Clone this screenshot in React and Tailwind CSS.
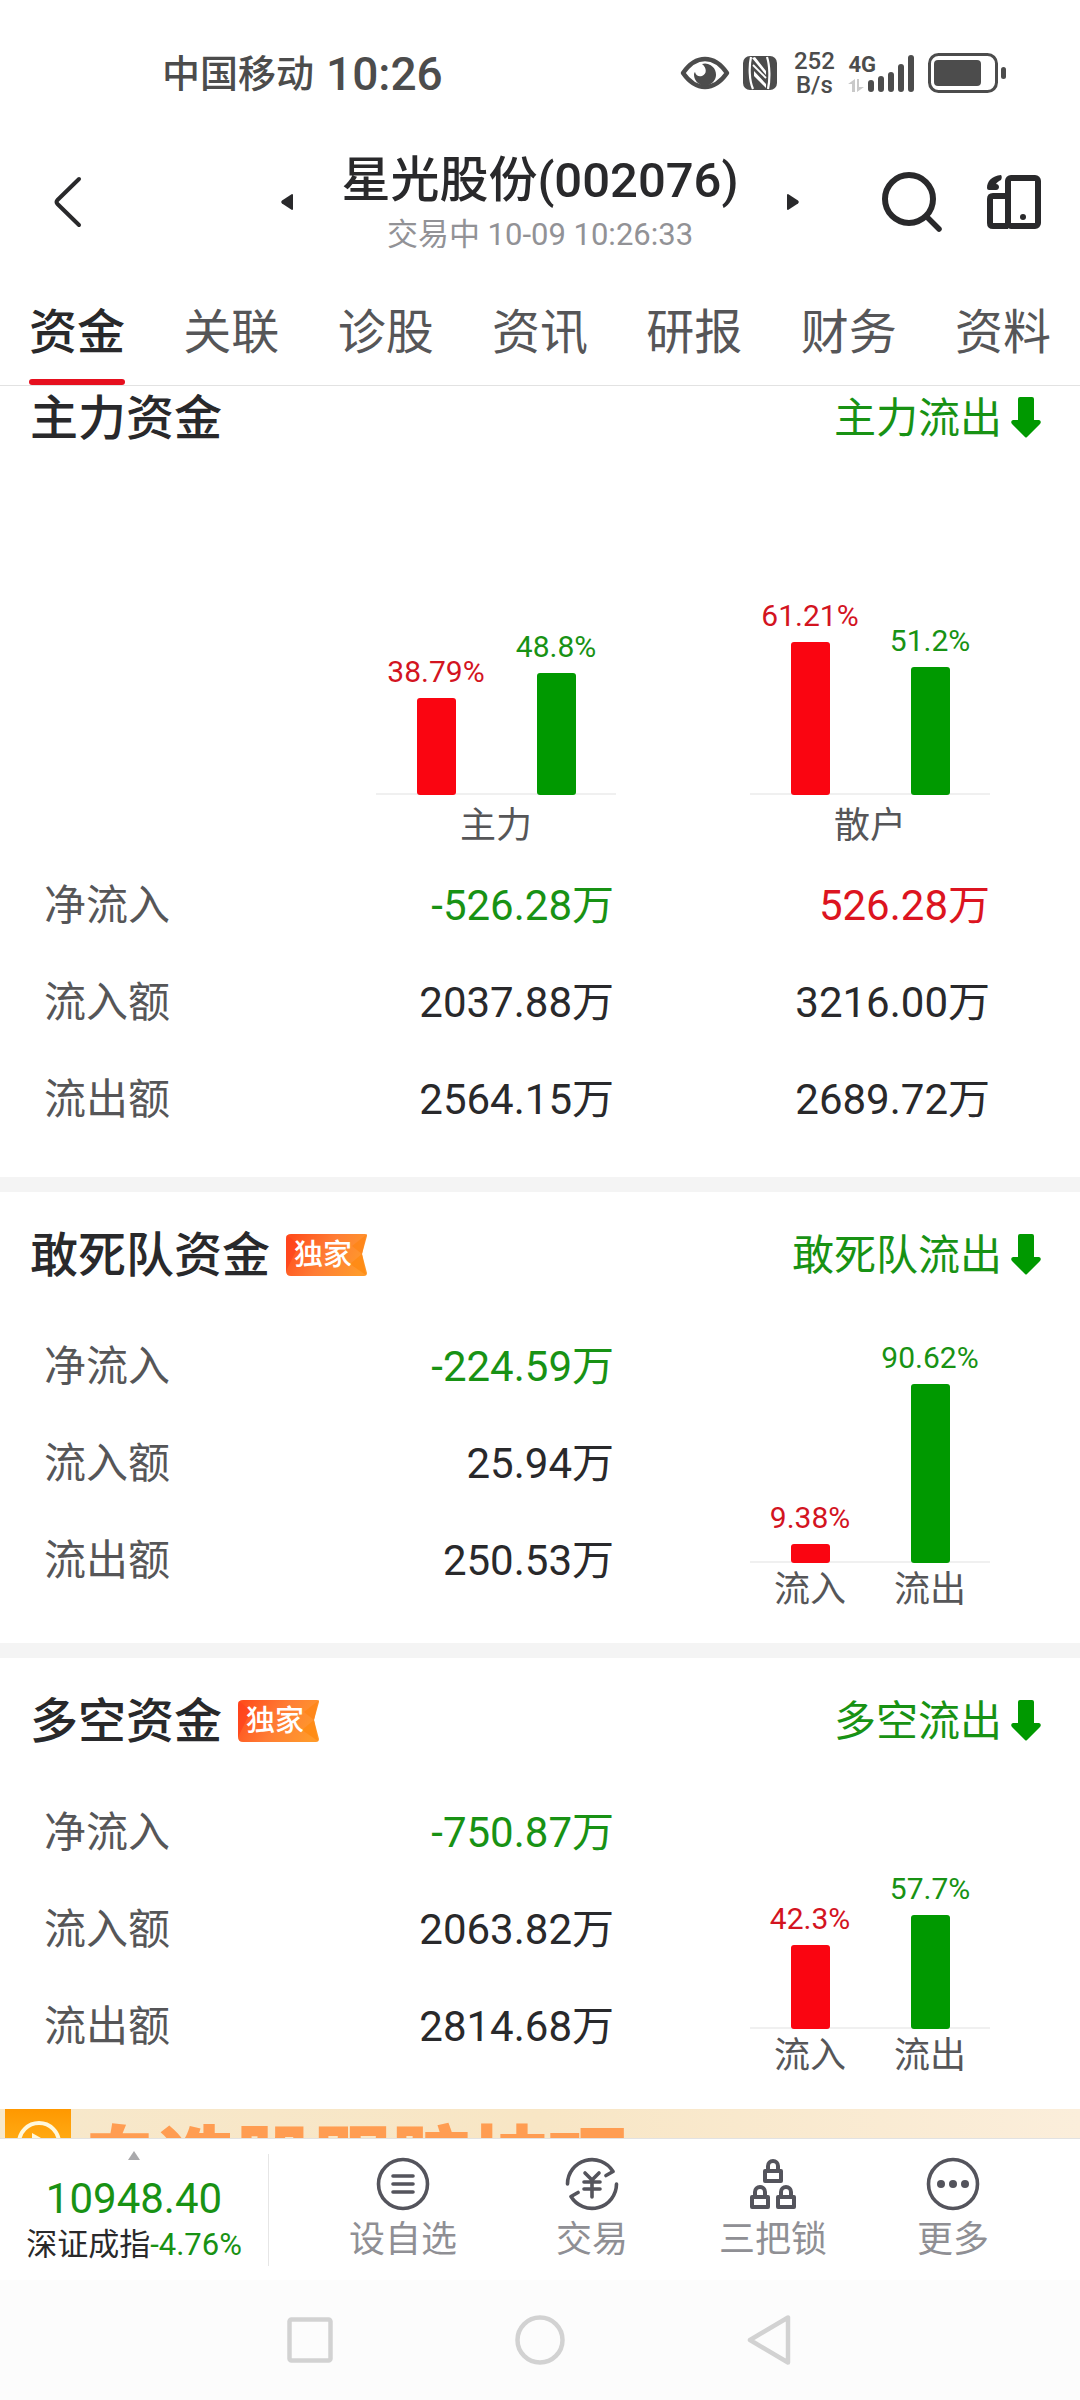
const TABS = ["资金", "关联", "诊股", "资讯", "研报", "财务", "资料"];

const OVERVIEW = [
  { label: "净流入", main: "-526.28万", retail: "526.28万", signed: true },
  { label: "流入额", main: "2037.88万", retail: "3216.00万" },
  { label: "流出额", main: "2564.15万", retail: "2689.72万" },
];

function StatusBar() {
  return (
    <div className="flex h-[146px] shrink-0 items-center justify-between pr-[74px] pl-[162px] text-[#4c4c4c]">
      <div className="flex items-center gap-[12px] pt-[2px] font-medium">
        <span className="text-[38px] leading-[56px]">中国移动</span>
        <span className="text-[46px] leading-[56px]">10:26</span>
      </div>
      <div className="flex items-center">
        <svg className="h-[34px] w-[50px]" viewBox="0 0 50 34" fill="none" aria-hidden="true">
          <path d="M3 17C10 7 17 3 25 3s15 4 22 14c-7 10-14 14-22 14S10 27 3 17Z" stroke="currentColor" strokeWidth="4.5" strokeLinejoin="round" />
          <path d="M22 8a11 11 0 1 1-8 11c0-1 0-2 1-3 1 4 4 5 7 4 5-2 5-8 0-12Z" fill="currentColor" />
        </svg>
        <svg className="ml-[13px] h-[34px] w-[34px]" viewBox="0 0 34 34" aria-hidden="true">
          <rect width="34" height="34" rx="7" fill="currentColor" />
          <path d="M8 1c-2 9-2 23 2 32M25 33c2-9 2-23-1-32" stroke="#fff" strokeWidth="2.2" fill="none" />
          <path d="M9 2l3-1 11 14v4ZM11 15l12 13v4L11 20Z" fill="#fff" />
          <path d="M10 9l13 13" stroke="#fff" strokeWidth="1.800" fill="none" />
        </svg>
        <div className="ml-[17px] flex w-[40px] flex-col items-center text-[24px] leading-[24px] font-medium">
          <span>252</span>
          <span>B/s</span>
        </div>
        <div className="ml-[14px] flex h-[38px] items-end">
          <div className="flex h-full flex-col justify-between">
            <span className="text-[22px] leading-[22px] font-bold">4G</span>
            <svg className="h-[13px] w-[16px]" viewBox="0 0 16 13" aria-hidden="true">
              <path d="M7 0v13H4V5H0ZM9 13V0h2v8h5Z" fill="#c9c9c9" />
            </svg>
          </div>
          <svg className="-ml-[8px] h-[37px] w-[46px]" viewBox="0 0 46 37" fill="currentColor" aria-hidden="true">
            <rect x="0" y="25" width="6" height="12" rx="3" />
            <rect x="10" y="21" width="6" height="16" rx="3" />
            <rect x="20" y="17" width="6" height="20" rx="3" />
            <rect x="30" y="9" width="6" height="28" rx="3" />
            <rect x="40" y="0" width="6" height="37" rx="3" />
          </svg>
        </div>
        <svg className="ml-[14px] h-[40px] w-[78px]" viewBox="0 0 78 40" aria-hidden="true">
          <rect x="1.5" y="1.5" width="67" height="37" rx="9" fill="none" stroke="currentColor" strokeWidth="3" />
          <rect x="6" y="7" width="47" height="26" rx="4" fill="currentColor" />
          <rect x="73" y="14" width="5" height="12" rx="2.5" fill="currentColor" />
        </svg>
      </div>
    </div>
  );
}

function TitleBar() {
  return (
    <header className="grid h-[112px] shrink-0 grid-cols-[1fr_auto_1fr] items-center px-[39px] text-[#29292b]">
      <button type="button" aria-label="返回" className="justify-self-start pl-[13px]">
        <svg className="h-[54px] w-[30px]" viewBox="0 0 30 54" fill="none" aria-hidden="true">
          <path d="M27 4 5.500 25q-2 2 0 4L27 50" stroke="currentColor" strokeWidth="4" strokeLinecap="round" />
        </svg>
      </button>
      <div className="flex items-center gap-[48px]">
        <button type="button" aria-label="上一只">
          <svg className="h-[16px] w-[12px]" viewBox="0 0 12 16" aria-hidden="true">
            <path d="M12 1v14q0 1-1 1L1 9.500Q-.5 8 1 6.500L11 0q1 0 1 1Z" fill="currentColor" />
          </svg>
        </button>
        <div className="flex flex-col items-center pt-[2px]">
          <h1 className="text-[49px] leading-[64px] font-medium">星光股份(002076)</h1>
          <p className="text-[31px] leading-[44px] text-[#929296]">交易中 10-09 10:26:33</p>
        </div>
        <button type="button" aria-label="下一只">
          <svg className="h-[16px] w-[12px]" viewBox="0 0 12 16" aria-hidden="true">
            <path d="M0 1v14q0 1 1 1l10-6.500q1.500-1.500 0-3L1 0Q0 0 0 1Z" fill="currentColor" />
          </svg>
        </button>
      </div>
      <div className="flex items-center gap-[45px] justify-self-end">
        <button type="button" aria-label="搜索">
          <svg className="h-[60px] w-[60px]" viewBox="0 0 60 60" fill="none" stroke="currentColor" strokeLinecap="round" aria-hidden="true">
            <circle cx="27" cy="27" r="24" strokeWidth="6" />
            <path d="M45 45l12 12" strokeWidth="5.500" />
          </svg>
        </button>
        <button type="button" aria-label="切换设备">
          <svg className="h-[54px] w-[54px]" viewBox="0 0 54 54" fill="none" stroke="currentColor" aria-hidden="true">
            <rect x="21" y="3" width="30" height="48" rx="3" strokeWidth="6" />
            <path d="M21 21H6q-3 0-3 3v24q0 3 3 3h15" strokeWidth="6" />
            <circle cx="36" cy="42" r="3" fill="currentColor" stroke="none" />
            <path d="M14 0c-9 1-14 6-14 13q0 2 2 2h7c4 0 4-6 0-6 1-2 3-3 5-4 1-2 1-4 0-5Z" fill="currentColor" stroke="none" />
          </svg>
        </button>
      </div>
    </header>
  );
}

function Tabs() {
  return (
    <nav className="flex shrink-0 justify-between border-b border-[#e2e2e2] px-[29px] text-[48px] leading-[64px] text-[#565658]">
      {TABS.map((tab, i) => (
        <button
          key={tab}
          type="button"
          aria-current={i === 0 ? "page" : undefined}
          className={i === 0 ? "flex flex-col pt-[43px] font-medium text-[#29292b]" : "flex flex-col pt-[43px]"}
        >
          {tab}
          <span className={i === 0 ? "mt-[14px] h-[6px] w-full rounded-full bg-[#e60f1e]" : "mt-[14px] h-[6px] w-full"} />
        </button>
      ))}
    </nav>
  );
}

function ExclusiveBadge() {
  return (
    <span className="relative mb-[3px] flex h-[42px] w-[81px] items-center pl-[8px] text-[29px] leading-[42px] font-medium text-white">
      <svg className="absolute inset-0 h-full w-full" viewBox="0 0 81 42" aria-hidden="true">
        <defs>
          <linearGradient id="badge" x1="0" y1="0.300" x2="1" y2="0.600">
            <stop offset="0" stopColor="#ff4f1c" />
            <stop offset="0.500" stopColor="#ff7d35" />
            <stop offset="1" stopColor="#ff9a2b" />
          </linearGradient>
        </defs>
        <path d="M5 0h74q3 0 2 2l-5 18 5 19q0 3-3 3H5q-5 0-5-5V5q0-5 5-5Z" fill="url(#badge)" />
        <path d="M1 1l12 10-13 26V5q0-3 1-4Z" fill="#ff3d1c" opacity=".6" />
        <path d="M80 1L66 12l10 8Z" fill="#ff8417" opacity=".8" />
        <path d="M80 41L64 30l12-10Z" fill="#ff8a12" opacity=".8" />
      </svg>
      <span className="relative">独家</span>
    </span>
  );
}

function SectionHeading({ title, trend, exclusive }) {
  return (
    <div className="flex h-[66px] items-center justify-between pr-[39px] pl-[30px]">
      <div className="flex items-center gap-[16px]">
        <h2 className="text-[48px] leading-[66px] font-medium text-[#29292b]">{title}</h2>
        {exclusive && <ExclusiveBadge />}
      </div>
      <a href="#trend" className="flex items-center gap-[9px] text-[42px] leading-[66px] text-[#189214]">
        {trend}
        <svg className="mb-[4px] h-[41px] w-[30px]" viewBox="0 0 30 41" aria-hidden="true">
          <path d="M9 0h12q2 0 2 2v21h5q3 1 1 4L16 40q-1 1-2 0L1 27q-2-3 1-4h5V2q0-2 2-2Z" fill="#009900" />
        </svg>
      </a>
    </div>
  );
}

function Bar({ text, size, up }) {
  return (
    <div className="flex flex-1 flex-col items-center">
      <span className={up ? "text-[30px] leading-[36px] text-[#d3141f]" : "text-[30px] leading-[36px] text-[#189214]"}>{text}</span>
      <div
        className={up ? "mt-[8px] w-[39px] rounded-[3px] bg-[#fa0511]" : "mt-[8px] w-[39px] rounded-[3px] bg-[#009900]"}
        style={{ height: size }}
      />
    </div>
  );
}

function BarChart({ inflow, outflow, scale, labels, className }) {
  return (
    <figure className={className}>
      <div className="flex flex-1 items-end border-b-2 border-[#f0f0f0]">
        <div className="-mb-[2px] flex flex-1 items-end">
          <Bar text={`${inflow}%`} size={Math.round(inflow * scale)} up />
          <Bar text={`${outflow}%`} size={Math.round(outflow * scale)} />
        </div>
      </div>
      <figcaption className="flex text-[36px] text-[#565658]">
        {labels.map((label) => (
          <span key={label} className="flex-1 text-center">{label}</span>
        ))}
      </figcaption>
    </figure>
  );
}

const ROW = "h-[97px] text-[42px] leading-[60px]";
const LABEL = "text-left font-normal text-[#565658]";

function ExclusiveSection({ title, trend, rows, inflow, outflow }) {
  return (
    <section className="border-t-[15px] border-[#f4f4f4] pt-[31px] pb-[26px]">
      <SectionHeading title={title} trend={trend} exclusive />
      <div className="mt-[29px] flex items-start pr-[90px] pl-[44px]">
        <table className="flex-1 table-fixed pt-px">
          <tbody className="block">
            {rows.map(([label, value], i) => (
              <tr key={label} className={`${ROW} flex items-center justify-between`}>
                <th scope="row" className={LABEL}>{label}</th>
                <td className={i === 0 ? "text-right text-[#189214]" : "text-right text-[#29292b]"}>{value}</td>
              </tr>
            ))}
          </tbody>
        </table>
        <BarChart
          inflow={inflow}
          outflow={outflow}
          scale={1.98}
          labels={["流入", "流出"]}
          className="ml-[136px] flex h-[299px] w-[240px] flex-col leading-[54px]"
        />
      </div>
    </section>
  );
}

function Banner() {
  return (
    <a href="#course" className="flex items-start bg-linear-to-r from-[#f7e8cb] via-[#f8e6c5] to-[#fbeedb] pl-[5px]">
      <svg className="h-[96px] w-[66px] shrink-0" viewBox="0 0 66 96" aria-hidden="true">
        <defs>
          <linearGradient id="play" x1="0" y1="0" x2="0" y2="1">
            <stop offset="0" stopColor="#ff9800" />
            <stop offset="0.500" stopColor="#ffb41f" />
          </linearGradient>
        </defs>
        <rect width="66" height="96" fill="url(#play)" />
        <circle cx="34" cy="34" r="20" fill="none" stroke="#fff8dc" strokeWidth="4" />
        <path d="M27 24l18 10-18 10Z" fill="#fff8dc" />
      </svg>
      <span className="pt-[14px] pl-[9px] text-[78px] leading-[84px] font-black whitespace-nowrap text-[#ff9d52]">自选股跟踪技巧</span>
    </a>
  );
}

function ListIcon() {
  return (
    <svg className="h-[54px] w-[54px]" viewBox="0 0 54 54" fill="none" stroke="#54545c" strokeWidth="3.600" strokeLinecap="round" aria-hidden="true">
      <circle cx="27" cy="27" r="24.500" />
      <path d="M17 19h20M17 27h20M17 35h20" />
    </svg>
  );
}

function TradeIcon() {
  return (
    <svg className="h-[54px] w-[54px]" viewBox="0 0 54 54" fill="none" stroke="#54545c" strokeWidth="3.600" strokeLinecap="round" strokeLinejoin="round" aria-hidden="true">
      <path d="M2.500 27A24.500 24.500 0 0 1 48 14.500L41 18.500" />
      <path d="M51.500 27A24.500 24.500 0 0 1 6 39.500L13 35.500" />
      <path d="M20 16l7 7 7-7M27 23v17M19 25h16M19 32h16" />
    </svg>
  );
}

function LocksIcon() {
  return (
    <svg className="h-[54px] w-[54px]" viewBox="0 0 54 54" fill="none" stroke="#54545c" strokeWidth="4" strokeLinejoin="round" aria-hidden="true">
      <rect x="19" y="14" width="16" height="10" />
      <path d="M22 14V9a5 5 0 0 1 10 0v5" />
      <rect x="6" y="40" width="16" height="10" />
      <path d="M9 40v-5a5 5 0 0 1 10 0v5" />
      <rect x="32" y="40" width="16" height="10" />
      <path d="M35 40v-5a5 5 0 0 1 10 0v5" />
    </svg>
  );
}

function MoreIcon() {
  return (
    <svg className="h-[54px] w-[54px]" viewBox="0 0 54 54" fill="none" aria-hidden="true">
      <circle cx="27" cy="27" r="24.500" stroke="#54545c" strokeWidth="3.600" />
      <g fill="#54545c">
        <circle cx="15" cy="27" r="4" />
        <circle cx="27" cy="27" r="4" />
        <circle cx="39" cy="27" r="4" />
      </g>
    </svg>
  );
}

const ACTIONS = [
  ["设自选", ListIcon],
  ["交易", TradeIcon],
  ["三把锁", LocksIcon],
  ["更多", MoreIcon],
];

function BottomBar() {
  return (
    <footer className="flex h-[142px] shrink-0 items-center border-t border-[#e2e2e2]">
      <button type="button" className="flex h-[112px] w-[269px] flex-col items-center justify-start border-r border-[#e6e6e6]">
        <svg className="-mt-[3px] h-[9px] w-[12px] shrink-0" viewBox="0 0 12 9" aria-hidden="true">
          <path d="M6 0l6 9H0Z" fill="#a9a9ac" />
        </svg>
        <span className="mt-[14px] text-[42px] leading-[50px] text-[#189214]">10948.40</span>
        <span className="flex text-[31px] leading-[42px] text-[#29292b]">
          深证成指<span className="text-[#189214]">-4.76%</span>
        </span>
      </button>
      <nav className="grid flex-1 grid-cols-[190fr_188fr_174fr_186fr] pt-[6px] pr-[34px] pl-[39px]">
        {ACTIONS.map(([label, Icon]) => (
          <button key={label} type="button" className="flex flex-col items-center text-[36px] leading-[58px] text-[#8f8f94]">
            <Icon />
            {label}
          </button>
        ))}
      </nav>
    </footer>
  );
}

function SystemNav() {
  return (
    <div className="flex h-[120px] shrink-0 items-center justify-center gap-[178px] bg-[#fcfcfc]">
      <button type="button" aria-label="最近任务">
        <svg className="h-[52px] w-[52px]" viewBox="0 0 52 52" fill="none" stroke="#d2d2d2" strokeWidth="4.500" aria-hidden="true">
          <rect x="5.500" y="5.500" width="41" height="41" rx="2" />
        </svg>
      </button>
      <button type="button" aria-label="主屏幕">
        <svg className="h-[52px] w-[52px]" viewBox="0 0 52 52" fill="none" stroke="#d2d2d2" strokeWidth="4.500" aria-hidden="true">
          <circle cx="26" cy="26" r="22.500" />
        </svg>
      </button>
      <button type="button" aria-label="返回上一页">
        <svg className="h-[52px] w-[52px]" viewBox="0 0 52 52" fill="none" stroke="#d2d2d2" strokeWidth="4.500" strokeLinejoin="round" aria-hidden="true">
          <path d="M44 3.500v45L6 26Z" />
        </svg>
      </button>
    </div>
  );
}

export default function App() {
  return (
    <div className="flex h-screen flex-col overflow-hidden bg-white font-['Roboto','Noto_Sans_CJK_SC',sans-serif]">
      <StatusBar />
      <TitleBar />
      <Tabs />
      <main className="min-h-0 flex-1 overflow-hidden">
        <section className="pb-[29px]">
          <SectionHeading title="主力资金" trend="主力流出" />
          <div className="flex justify-end gap-[134px] pr-[90px]">
            <BarChart inflow={38.79} outflow={48.8} scale={2.5} labels={["主力"]} className="flex h-[405px] w-[240px] flex-col leading-[62px]" />
            <BarChart inflow={61.21} outflow={51.2} scale={2.5} labels={["散户"]} className="flex h-[405px] w-[240px] flex-col leading-[62px]" />
          </div>
          <div className="pr-[90px] pl-[44px]">
            <table className="w-full table-fixed">
              <tbody>
                {OVERVIEW.map((row) => (
                  <tr key={row.label} className={ROW}>
                    <th scope="row" className={LABEL}>{row.label}</th>
                    <td className={row.signed ? "w-[374px] text-right text-[#189214]" : "w-[374px] text-right text-[#29292b]"}>{row.main}</td>
                    <td className={row.signed ? "w-[376px] text-right text-[#dc1420]" : "w-[376px] text-right text-[#29292b]"}>{row.retail}</td>
                  </tr>
                ))}
              </tbody>
            </table>
          </div>
        </section>
        <ExclusiveSection
          title="敢死队资金"
          trend="敢死队流出"
          inflow={9.38}
          outflow={90.62}
          rows={[["净流入", "-224.59万"], ["流入额", "25.94万"], ["流出额", "250.53万"]]}
        />
        <ExclusiveSection
          title="多空资金"
          trend="多空流出"
          inflow={42.3}
          outflow={57.7}
          rows={[["净流入", "-750.87万"], ["流入额", "2063.82万"], ["流出额", "2814.68万"]]}
        />
        <Banner />
      </main>
      <BottomBar />
      <SystemNav />
    </div>
  );
}
